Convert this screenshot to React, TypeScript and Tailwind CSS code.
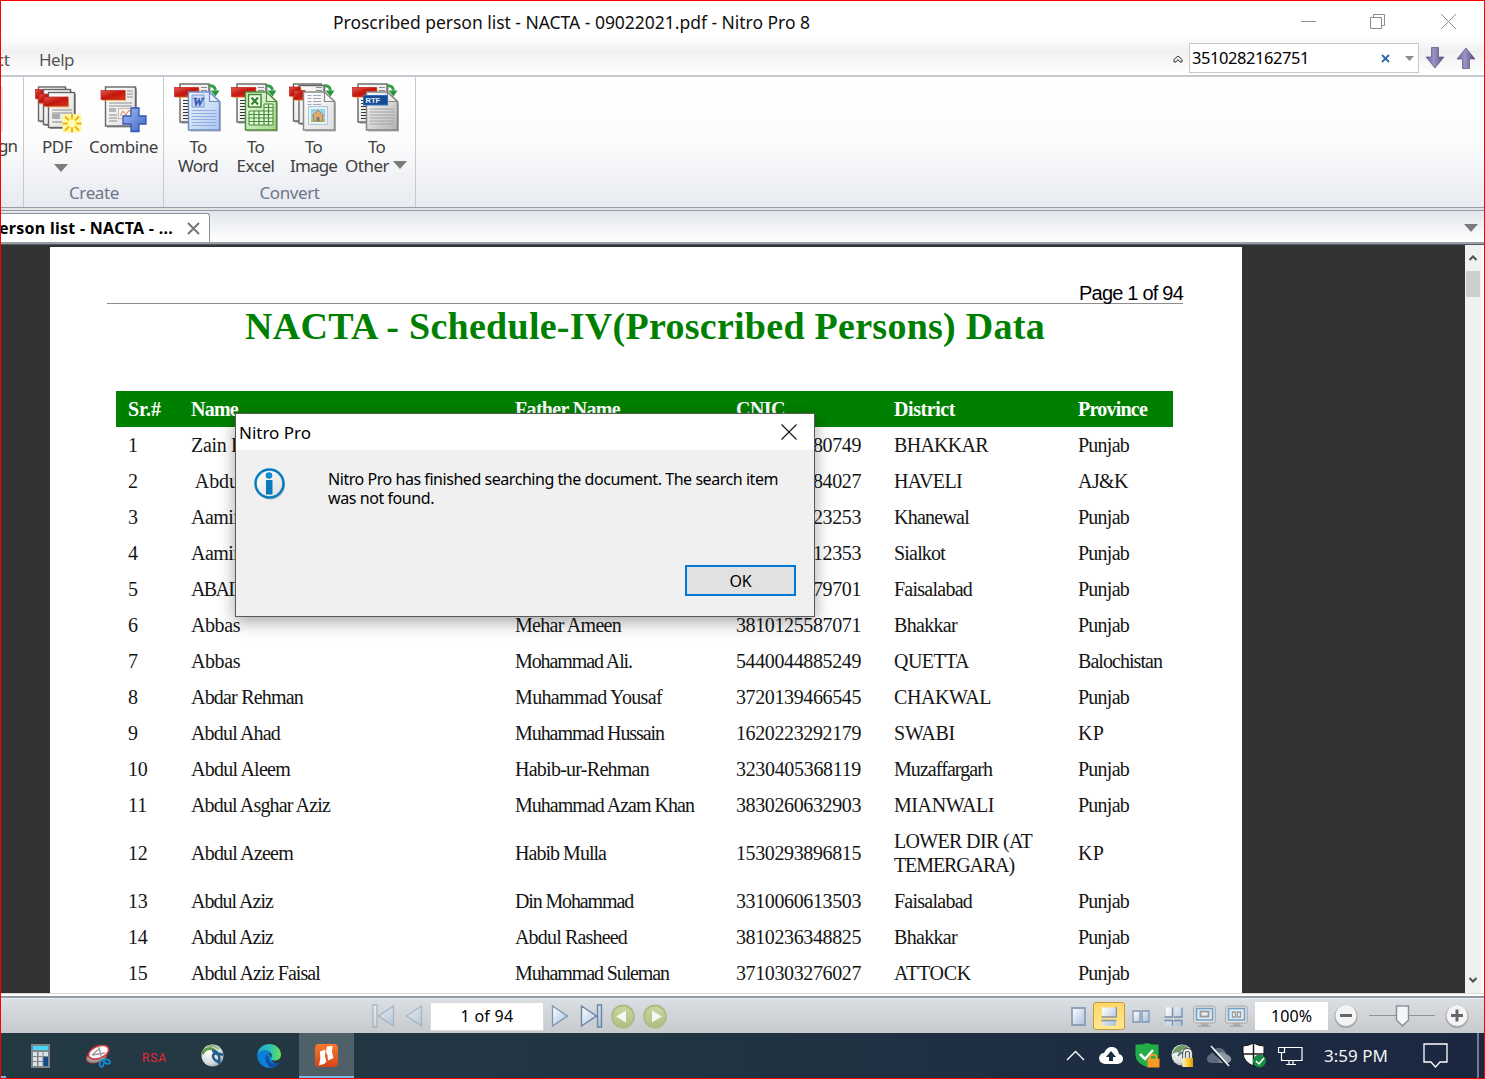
import { useLayoutEffect, useRef, type ReactNode } from "react";

/** Single-line text whose tracking is adjusted so that it spans `w` pixels. */
function Fit({ w, children, className = "" }: { w: number; children: string; className?: string }) {
  const ref = useRef<HTMLSpanElement>(null);
  useLayoutEffect(() => {
    const el = ref.current;
    if (!el) return;
    el.style.letterSpacing = "0px";
    const natural = el.getBoundingClientRect().width;
    el.style.letterSpacing = `${(w - natural) / children.length}px`;
  }, [w, children]);
  return (
    <span ref={ref} className={`inline-block w-max shrink-0 whitespace-pre ${className}`}>
      {children}
    </span>
  );
}

type Cell = [string, number];
type Row = { n: string; name: Cell; father?: Cell; cnic: Cell; district: Cell[]; province: Cell };

const rows: Row[] = [
  { n: "1", name: ["Zain Hassan", 96], cnic: ["3830195380749", 125], district: [["BHAKKAR", 94]], province: ["Punjab", 51] },
  { n: "2", name: [" Abdul Basit", 99], cnic: ["8230154984027", 125], district: [["HAVELI", 68]], province: ["AJ&K", 50] },
  { n: "3", name: ["Aamir Ali", 76], cnic: ["3610391423253", 125], district: [["Khanewal", 75]], province: ["Punjab", 51] },
  { n: "4", name: ["Aamir Ali", 76], cnic: ["3460356812353", 125], district: [["Sialkot", 51]], province: ["Punjab", 51] },
  { n: "5", name: ["ABAID ULLAH", 118], cnic: ["3310047579701", 125], district: [["Faisalabad", 78]], province: ["Punjab", 51] },
  { n: "6", name: ["Abbas", 49], father: ["Mehar Ameen", 106], cnic: ["3810125587071", 125], district: [["Bhakkar", 63]], province: ["Punjab", 51] },
  { n: "7", name: ["Abbas", 49], father: ["Mohammad Ali.", 117], cnic: ["5440044885249", 125], district: [["QUETTA", 75]], province: ["Balochistan", 84] },
  { n: "8", name: ["Abdar Rehman", 112], father: ["Muhammad Yousaf", 147], cnic: ["3720139466545", 125], district: [["CHAKWAL", 97]], province: ["Punjab", 51] },
  { n: "9", name: ["Abdul Ahad", 89], father: ["Muhammad Hussain", 149], cnic: ["1620223292179", 125], district: [["SWABI", 61]], province: ["KP", 26] },
  { n: "10", name: ["Abdul Aleem", 99], father: ["Habib-ur-Rehman", 134], cnic: ["3230405368119", 125], district: [["Muzaffargarh", 98]], province: ["Punjab", 51] },
  { n: "11", name: ["Abdul Asghar Aziz", 139], father: ["Muhammad Azam Khan", 179], cnic: ["3830260632903", 125], district: [["MIANWALI", 100]], province: ["Punjab", 51] },
  { n: "12", name: ["Abdul Azeem", 102], father: ["Habib Mulla", 91], cnic: ["1530293896815", 125], district: [["LOWER DIR (AT", 138], ["TEMERGARA)", 120]], province: ["KP", 26] },
  { n: "13", name: ["Abdul Aziz", 82], father: ["Din Mohammad", 118], cnic: ["3310060613503", 125], district: [["Faisalabad", 78]], province: ["Punjab", 51] },
  { n: "14", name: ["Abdul Aziz", 82], father: ["Abdul Rasheed", 112], cnic: ["3810236348825", 125], district: [["Bhakkar", 63]], province: ["Punjab", 51] },
  { n: "15", name: ["Abdul Aziz Faisal", 129], father: ["Muhammad Suleman", 154], cnic: ["3710303276027", 125], district: [["ATTOCK", 77]], province: ["Punjab", 51] },
];

const tableCols = "grid grid-cols-[63px_324px_221px_158px_184px_94px] pl-3";

function Defs() {
  return (
    <svg width="0" height="0" className="absolute">
      <defs>
        <linearGradient id="red" x1="0" y1="0" x2="1" y2="1">
          <stop offset="0" stopColor="#de5a50" /><stop offset="0.5" stopColor="#c4150c" /><stop offset="1" stopColor="#d33a1b" />
        </linearGradient>
        <linearGradient id="paper" x1="0" y1="0" x2="1" y2="1">
          <stop offset="0" stopColor="#ffffff" /><stop offset="1" stopColor="#dedede" />
        </linearGradient>
        <linearGradient id="bluePaper" x1="0" y1="0" x2="1" y2="1">
          <stop offset="0" stopColor="#f7faff" /><stop offset="1" stopColor="#abc6ef" />
        </linearGradient>
        <linearGradient id="greenPaper" x1="0" y1="0" x2="1" y2="1">
          <stop offset="0" stopColor="#f6fff1" /><stop offset="1" stopColor="#a4d288" />
        </linearGradient>
        <linearGradient id="grayPaper" x1="0" y1="0" x2="1" y2="1">
          <stop offset="0" stopColor="#ffffff" /><stop offset="1" stopColor="#b2b2b2" />
        </linearGradient>
        <linearGradient id="plus" x1="0" y1="0" x2="1" y2="1">
          <stop offset="0" stopColor="#a3bdf3" /><stop offset="1" stopColor="#3e64c4" />
        </linearGradient>
        <linearGradient id="glass" x1="0" y1="0" x2="1" y2="1">
          <stop offset="0" stopColor="#ffffff" /><stop offset="1" stopColor="#a6c0d9" />
        </linearGradient>
        <linearGradient id="edgeTop" x1="0" y1="0.5" x2="1" y2="0.5">
          <stop offset="0" stopColor="#1ba6dd" /><stop offset="0.6" stopColor="#34c4b0" /><stop offset="1" stopColor="#6be04e" />
        </linearGradient>
        <linearGradient id="nitro" x1="0" y1="0" x2="0" y2="1">
          <stop offset="0" stopColor="#f77b2f" /><stop offset="1" stopColor="#d2451b" />
        </linearGradient>
        <linearGradient id="arrow" x1="0" y1="0" x2="1" y2="0">
          <stop offset="0" stopColor="#74689b" /><stop offset="0.45" stopColor="#9993c6" /><stop offset="1" stopColor="#594676" />
        </linearGradient>
        <linearGradient id="lock" x1="0" y1="0" x2="1" y2="0">
          <stop offset="0" stopColor="#fff3c0" /><stop offset="0.6" stopColor="#ffc62b" /><stop offset="1" stopColor="#e39206" />
        </linearGradient>
        <radialGradient id="ball" cx="0.35" cy="0.3" r="0.8">
          <stop offset="0" stopColor="#ffffff" /><stop offset="0.7" stopColor="#d4dbdb" /><stop offset="1" stopColor="#8d9999" />
        </radialGradient>
        <linearGradient id="green" x1="0" y1="0" x2="0" y2="1">
          <stop offset="0" stopColor="#c8d8a3" /><stop offset="1" stopColor="#adbf83" />
        </linearGradient>
      </defs>
    </svg>
  );
}

function Sheet({ x, y, w = 31, h = 40 }: { x: number; y: number; w?: number; h?: number }) {
  return (
    <g>
      <rect x={x + 1.5} y={y + 1.5} width={w} height={h} fill="#333" opacity="0.5" />
      <rect x={x} y={y} width={w} height={h} fill="url(#paper)" stroke="#666" strokeWidth="1.4" />
    </g>
  );
}

function Lines({ x, y, w, n, gap = 3, c = "#8b8b8b" }: { x: number; y: number; w: number; n: number; gap?: number; c?: string }) {
  return <path d={Array.from({ length: n }, (_, i) => `M${x} ${y + i * gap}h${w}`).join("")} stroke={c} strokeWidth="1.1" fill="none" />;
}

function Banner({ x, y, w = 25 }: { x: number; y: number; w?: number }) {
  return (
    <g>
      <rect x={x + 1} y={y + 1} width={w} height="9.5" fill="#f0a03a" opacity="0.7" />
      <rect x={x} y={y} width={w} height="9" fill="url(#red)" stroke="#bd2219" strokeWidth="0.7" />
    </g>
  );
}

function PdfIcon() {
  return (
    <svg width="48" height="48" viewBox="0 0 48 48" className="block overflow-visible">
      <Sheet x={3.5} y={1} w={27} h={34} />
      <Banner x={0.5} y={3.5} w={10} />
      <Sheet x={8.5} y={3.5} w={27} h={35} />
      <Banner x={4} y={8} w={10} />
      <Sheet x={13.5} y={6.5} w={26} h={35} />
      <Lines x={17} y={24} w={20} n={2} />
      <path d="M17 28h8v5h-8z" fill="#ababab" />
      <Lines x={17} y={36} w={10} n={1} />
      <Lines x={28} y={29} w={9} n={3} />
      <Banner x={9} y={11} w={24} />
      <rect x="27.5" y="28" width="19" height="18.5" fill="#fff7a3" />
      <path d="M37 28v18.500M27.500 37.500h19M30 30.500l14 14M44 30.500l-14 14" stroke="#f2b40a" strokeWidth="2" />
      <circle cx="37" cy="37.500" r="4.200" fill="#fffbc0" stroke="#ffe860" strokeWidth="1.300" />
    </svg>
  );
}

function CombineIcon() {
  return (
    <svg width="48" height="48" viewBox="0 0 48 48" className="block overflow-visible">
      <Sheet x={5.5} y={1} w={30} h={39} />
      <Lines x={27} y={5} w={6} n={3} />
      <Lines x={9} y={17} w={23} n={2} />
      <path d="M9 22h7v4H9z" fill="#b5b5b5" />
      <Lines x={9} y={29} w={8} n={3} />
      <rect x="18.500" y="22.500" width="14" height="10" fill="#f9f1ea" stroke="#c9b8ae" />
      <path d="M20 30l3-5 3 4 3-5 3 4" stroke="#d78470" fill="none" />
      <Banner x={1} y={4.500} w={24} />
      <path d="M31 22h8v8h7v8h-7v7.500h-8V38h-8v-8h8z" fill="url(#plus)" stroke="#3356b5" strokeWidth="1.300" />
    </svg>
  );
}

function ConvertBase({ double = false }: { double?: boolean }) {
  return (
    <g>
      {double && <Sheet x={4.500} y={1} w={28} h={37} />}
      <Sheet x={double ? 10 : 6} y={double ? 2.5 : 1} w={double ? 25 : 29} h={38} />
      {!double && <Lines x={9} y={17.500} w={8} n={7} c="#333" />}
      <Lines x={27} y={4.500} w={6} n={2} />
      {double ? <><Banner x={0.500} y={4} w={11} /><Banner x={5} y={7.500} w={11} /></> : <Banner x={0.500} y={4.500} w={24} />}
      <path d="M35 2.500q6 0 6.500 5" stroke="#35a04a" strokeWidth="2.800" fill="none" />
      <path d="M36.500 7.500h9l-4 6z" fill="#299641" />
    </g>
  );
}

function FoldedPage({ fill, stroke }: { fill: string; stroke: string }) {
  return (
    <g>
      <path d="M16 11h20l11 9v28.500H16z" fill="#333" opacity="0.35" />
      <path d="M14.500 9h21l10 9.500v28.500h-31z" fill={fill} stroke={stroke} strokeWidth="1.500" />
      <path d="M35.500 9v9.500h10z" fill="#fff" fillOpacity="0.450" stroke={stroke} strokeWidth="1.200" />
    </g>
  );
}

function WordIcon() {
  return (
    <svg width="49" height="49" viewBox="0 0 49 49" className="block overflow-visible">
      <ConvertBase />
      <FoldedPage fill="url(#bluePaper)" stroke="#6f8ec8" />
      <Lines x={17.500} y={27.500} w={25} n={6} gap={3} c="#93ade0" />
      <rect x="18" y="12" width="12" height="12" fill="#ccdaf4" stroke="#7d97d4" />
      <text x="24" y="22.500" textAnchor="middle" fill="#3158b5" stroke="#3158b5" strokeWidth="0.500" className="font-['Liberation_Serif'] text-[12px] font-bold italic">W</text>
    </svg>
  );
}

function ExcelIcon() {
  return (
    <svg width="49" height="49" viewBox="0 0 49 49" className="block overflow-visible">
      <ConvertBase />
      <FoldedPage fill="url(#greenPaper)" stroke="#4e9238" />
      <path d="M33 21h9v21H18V28h15z" fill="#e8f8df" stroke="#418d32" />
      <path d="M18 31.500h24M18 35h24M18 38.500h24M33 24.500h9M33 28h9M23 28v14M28 28v14M33 28v14M37.500 21v21" stroke="#418d32" strokeWidth="1.200" />
      <rect x="17.500" y="11.500" width="12.500" height="12.500" fill="#f2ffed" stroke="#3b872e" strokeWidth="1.500" />
      <path d="M20.500 14.500l6.500 7M27 14.500l-6.500 7" stroke="#36812b" strokeWidth="2.200" />
    </svg>
  );
}

function ImageIcon() {
  return (
    <svg width="49" height="49" viewBox="0 0 49 49" className="block overflow-visible">
      <ConvertBase double />
      <FoldedPage fill="url(#paper)" stroke="#8b8b8b" />
      <Lines x={18.500} y={12.500} w={4} n={4} c="#9da7b9" />
      <Lines x={24} y={12.500} w={8} n={4} c="#9da7b9" />
      <rect x="19.500" y="23.500" width="19" height="18" fill="#e8f0f8" stroke="#b3c4d6" />
      <rect x="22" y="26" width="14" height="13" fill="#91d3ee" />
      <path d="M22 36h14v3H22z" fill="#9fc56a" />
      <path d="M23 33l6-6 6 6h-1.500v5h-9v-5z" fill="#dfad6d" stroke="#a77c4d" strokeWidth="0.800" />
      <path d="M27.500 38v-4h3v4" fill="#777" />
    </svg>
  );
}

function RtfIcon() {
  return (
    <svg width="49" height="49" viewBox="0 0 49 49" className="block overflow-visible">
      <ConvertBase />
      <FoldedPage fill="url(#grayPaper)" stroke="#858585" />
      <Lines x={17.500} y={26} w={25} n={6} c="#a4a4a4" />
      <rect x="11.500" y="12.500" width="24" height="9.500" fill="#174c94" stroke="#2e6fb9" />
      <text x="13.500" y="20" fill="#e9f3ff" className="font-['Liberation_Sans'] text-[7.5px] font-bold">RTF</text>
    </svg>
  );
}

function Caret({ className = "" }: { className?: string }) {
  return (
    <svg width="14" height="8" viewBox="0 0 14 8" className={`block shrink-0 ${className}`}>
      <path d="M0 0h14L7 8z" fill="#7b7b7b" />
    </svg>
  );
}

function TitleBar() {
  return (
    <div className="flex h-[42px] items-center pl-[332px]">
      <Fit w={477} className="text-[17.5px] leading-[40px] text-[#111]">Proscribed person list - NACTA - 09022021.pdf - Nitro Pro 8</Fit>
      <svg width="160" height="18" viewBox="0 0 160 18" className="mb-[1px] ml-auto mr-[24px] block" fill="none" stroke="#8d8d8d">
        <path d="M1 8.500h15M70.500 4.500h11v11h-11zM73.500 4.500v-3h11v11h-3M141 1l15 15M156 1l-15 15" />
      </svg>
    </div>
  );
}

function MenuRow() {
  return (
    <div className="flex h-[32px] items-center text-[17px] text-[#555]">
      <span className="flex w-[9px] justify-end overflow-hidden pt-[2px]">ct</span>
      <span className="ml-[29px] pt-[2px]"><Fit w={35}>Help</Fit></span>
      <svg width="10" height="9" viewBox="0 0 10 9" className="ml-auto mr-[6px] block" fill="none" stroke="#333">
        <path d="M1 4.500l4-3.500 4 3.500V7H7L5 4.500 3 7H1z" />
      </svg>
      <div className="mb-[2px] flex h-[30px] w-[230px] shrink-0 items-center border border-[#c9c9c9] bg-white pl-[2px] text-black">
        <Fit w={117} className="text-[16.5px]">3510282162751</Fit>
        <svg width="9" height="9" viewBox="0 0 9 9" className="ml-[72px] block" stroke="#2b6ca8" strokeWidth="1.800"><path d="M1 1l7 7M8 1L1 8" /></svg>
        <svg width="9" height="5" viewBox="0 0 9 5" className="ml-[15px] block"><path d="M0 0h9L4.500 5z" fill="#8a8a8a" /></svg>
      </div>
      <svg width="20" height="22" viewBox="0 0 20 22" className="mb-[3px] ml-[6px] block"><path d="M6.500 0.500h7v9.500h5.500l-9 11-9-11h5.500z" fill="url(#arrow)" stroke="#615280" strokeWidth="0.700" /></svg>
      <svg width="20" height="22" viewBox="0 0 20 22" className="mb-[3px] ml-[11px] mr-[8px] block"><path d="M6.500 21.500h7V12h5.500l-9-11-9 11h5.500z" fill="url(#arrow)" stroke="#615280" strokeWidth="0.700" /></svg>
    </div>
  );
}

function RibbonButton({ icon, a, aw, b, bw = 0, className }: { icon: ReactNode; a: string; aw: number; b?: string; bw?: number; className: string }) {
  return (
    <div className={`flex flex-col items-center ${className}`}>
      {icon}
      <div className="mt-[5px] flex flex-col items-center text-[17px] leading-[19px]">
        <Fit w={aw}>{a}</Fit>
        {b && <Fit w={bw}>{b}</Fit>}
      </div>
    </div>
  );
}

function Ribbon() {
  return (
    <div className="flex h-[130px] bg-gradient-to-b from-white via-[#fcfcfc] to-[#e7eaf0] text-[17px] text-[#3e3e3e]">
      <div className="h-full w-[23px] border-r border-[#c7cbd0] pt-[10px]">
        <div className="h-[45px] w-[2px] bg-[#e4e4e4]" />
        <div className="mt-[3px] flex w-[16px] justify-end overflow-hidden leading-[22px]"><Fit w={19}>gn</Fit></div>
      </div>
      <div className="flex h-full w-[140px] flex-col border-r border-[#c7cbd0]">
        <div className="flex h-[105px] pt-[9px]">
          <div className="ml-[10px] flex w-[50px] flex-col items-center">
            <PdfIcon />
            <div className="-ml-[4px] mt-[3px] leading-[20px]"><Fit w={30}>PDF</Fit></div>
            <Caret className="ml-[3px] mt-[7px]" />
          </div>
          <div className="ml-[5px] flex w-[69px] flex-col items-center">
            <CombineIcon />
            <div className="mt-[3px] leading-[20px]"><Fit w={69}>Combine</Fit></div>
          </div>
        </div>
        <div className="flex h-[22px] items-center justify-center pl-[1px] text-[#70758a]"><Fit w={50}>Create</Fit></div>
      </div>
      <div className="flex h-full w-[252px] flex-col border-r border-[#c7cbd0]">
        <div className="flex h-[105px] pt-[6px]">
          <RibbonButton icon={<WordIcon />} a="To" aw={17} b="Word" bw={40} className="ml-[10px] w-[48px]" />
          <RibbonButton icon={<ExcelIcon />} a="To" aw={17} b="Excel" bw={38} className="ml-[9px] w-[49px]" />
          <RibbonButton icon={<ImageIcon />} a="To" aw={17} b="Image" bw={47} className="ml-[9px] w-[49px]" />
          <div className="ml-[14px] w-[62px]">
            <RibbonButton icon={<RtfIcon />} a="To" aw={17} className="w-[49px]" />
            <div className="-ml-[7px] flex items-center leading-[19px]">
              <Fit w={44}>Other</Fit>
              <Caret className="mb-[2px] ml-[4px]" />
            </div>
          </div>
        </div>
        <div className="flex h-[22px] items-center justify-center text-[#70758a]"><Fit w={60}>Convert</Fit></div>
      </div>
    </div>
  );
}

function TabBar() {
  return (
    <div className="flex h-[31px] items-end bg-gradient-to-b from-[#e2e5ec] to-white">
      <div className="flex h-[29px] w-[209px] items-center overflow-hidden rounded-tr-[3px] border-r border-t border-[#8c929b] bg-white">
        <div className="flex w-[172px] justify-end overflow-hidden"><Fit w={174} className="text-[16px] font-bold text-black">erson list - NACTA - ...</Fit></div>
        <svg width="13" height="13" viewBox="0 0 13 13" className="ml-[14px] block shrink-0" stroke="#777" strokeWidth="2"><path d="M1 1l11 11M12 1L1 12" /></svg>
      </div>
      <Caret className="mb-[10px] ml-auto mr-[6px]" />
    </div>
  );
}

function Page() {
  return (
    <div className="ml-[49px] mt-[2px] h-[746px] w-[1192px] overflow-hidden bg-white">
      <div className="ml-[57px] flex h-[57px] w-[1076px] items-end justify-end border-b border-[#8e8e8e]">
        <Fit w={104} className="mb-[-2px] font-['Liberation_Sans'] text-[20px] leading-[24px] text-black">Page 1 of 94</Fit>
      </div>
      <div className="ml-[195px] h-[87px] leading-[45px]">
        <Fit w={800} className="font-['Liberation_Serif'] text-[38px] font-bold text-[#008000]">NACTA - Schedule-IV(Proscribed Persons) Data</Fit>
      </div>
      <div className="ml-[66px] w-[1057px] font-['Liberation_Serif'] text-[20px] leading-[24px] text-[#151515]">
        <div className={`${tableCols} h-[36px] items-center bg-[#008000] font-bold text-white`}>
          <Fit w={33}>Sr.#</Fit>
          <Fit w={47}>Name</Fit>
          <Fit w={105}>Father Name</Fit>
          <Fit w={49}>CNIC</Fit>
          <Fit w={61}>District</Fit>
          <Fit w={69}>Province</Fit>
        </div>
        {rows.map((r) => (
          <div key={r.n} className={`${tableCols} items-center py-[6px]`}>
            <Fit w={r.n.length * 9.7}>{r.n}</Fit>
            <Fit w={r.name[1]}>{r.name[0]}</Fit>
            {r.father ? <Fit w={r.father[1]}>{r.father[0]}</Fit> : <span />}
            <Fit w={r.cnic[1]}>{r.cnic[0]}</Fit>
            <div className="flex flex-col">
              {r.district.map(([t, w]) => <div key={t} className="h-6"><Fit w={w}>{t}</Fit></div>)}
            </div>
            <Fit w={r.province[1]}>{r.province[0]}</Fit>
          </div>
        ))}
      </div>
    </div>
  );
}

function Dialog() {
  return (
    <div className="absolute left-[234px] top-[412px] flex h-[204px] w-[580px] flex-col border border-[#595959] bg-[#f0f0f0] text-black shadow-[0_5px_16px_rgba(0,0,0,0.35)]">
      <div className="flex h-[36px] items-center justify-between bg-white pl-[3px] pr-[16px]">
        <Fit w={72} className="pt-[2px] text-[17px]">Nitro Pro</Fit>
        <svg width="16" height="16" viewBox="0 0 16 16" className="mr-[1px]" stroke="#111" strokeWidth="1.100"><path d="M0.500 0.500l15 15M15.500 0.500l-15 15" /></svg>
      </div>
      <div className="flex pl-[18px] pt-[18px]">
        <svg width="32" height="33" viewBox="0 0 32 33" className="block">
          <circle cx="16.500" cy="17" r="14.500" fill="#888" opacity="0.500" />
          <circle cx="15.500" cy="15.500" r="14" fill="url(#paper)" stroke="#087cc0" strokeWidth="2.500" />
          <circle cx="15" cy="7.500" r="3.300" fill="#108bd0" />
          <path d="M12 12h6.500v14.500H12z" fill="#0878bf" />
        </svg>
        <div className="ml-[42px] mt-[2px] flex flex-col font-['Noto_Sans'] text-[16px] leading-[19px]">
          <Fit w={450}>Nitro Pro has finished searching the document. The search item</Fit>
          <Fit w={106}>was not found.</Fit>
        </div>
      </div>
      <div className="mb-[20px] ml-auto mr-[18px] mt-auto flex h-[31px] w-[111px] items-center justify-center border-2 border-[#0078d7] bg-[#e1e1e1] text-[16px]">
        <Fit w={22}>OK</Fit>
      </div>
    </div>
  );
}

function ScrollBar() {
  return (
    <div className="ml-auto flex h-[748px] w-[19px] flex-col items-center border-r-[3px] border-[#fafafa] bg-[#f0f0f0]">
      <svg width="8" height="6" viewBox="0 0 8 6" className="mt-[10px] block" fill="none" stroke="#505050" strokeWidth="2"><path d="M0.500 5L4 1.500 7.500 5" /></svg>
      <div className="mt-[10px] h-[26px] w-[14px] bg-[#cdcdcd]" />
      <svg width="8" height="6" viewBox="0 0 8 6" className="mb-[10px] mt-auto block" fill="none" stroke="#505050" strokeWidth="2"><path d="M0.500 1L4 4.500 7.500 1" /></svg>
    </div>
  );
}

function ZoomButton({ plus = false, className }: { plus?: boolean; className: string }) {
  return (
    <svg width="26" height="26" viewBox="0 0 26 26" className={`block shrink-0 ${className}`}>
      <circle cx="13" cy="13.500" r="11.500" fill="#a6a9ad" />
      <circle cx="13" cy="12.500" r="10.500" fill="#f4f4f4" />
      <path d={plus ? "M7 12.500h12M13 6.500v12" : "M7 12.500h12"} stroke="#666" strokeWidth="3" />
    </svg>
  );
}

function GreenNav({ next = false, className }: { next?: boolean; className: string }) {
  return (
    <svg width="24" height="25" viewBox="0 0 24 25" className={`block shrink-0 ${className}`}>
      <circle cx="12" cy="12.500" r="11" fill="url(#green)" stroke="#aabd80" strokeWidth="1.800" />
      <path d={next ? "M9 6.500l10 6-10 6z" : "M15 6.500l-10 6 10 6z"} fill="#f5f7ef" />
    </svg>
  );
}

function MonitorMode({ two = false, className }: { two?: boolean; className: string }) {
  return (
    <svg width="23" height="23" viewBox="0 0 23 23" className={`block shrink-0 ${className}`}>
      <rect x="0.700" y="1" width="21.500" height="17" rx="2" fill="#e3e3e3" stroke="#a5a5a5" />
      <rect x="3.500" y="3.500" width="16" height="11.500" fill="#dbe9f3" stroke="#6da1c8" strokeWidth="1.500" />
      {two ? <path d="M7.500 7h3v5h-3zM12.500 7h3v5h-3z" fill="#f4f4f4" stroke="#999" strokeWidth="1.300" /> : <rect x="7.500" y="6.500" width="8" height="5" fill="#eee" stroke="#999" strokeWidth="1.800" />}
      <path d="M8 18h7v2.500h3V22H5v-1.500h3z" fill="#aaa" />
    </svg>
  );
}

function StatusBar() {
  return (
    <div className="flex h-[35px] items-center border-t border-[#e9edf1] bg-gradient-to-b from-[#dadfe3] to-[#c7cacd]">
      <svg width="23" height="24" viewBox="0 0 23 24" className="ml-[371px] block opacity-60"><path d="M1 1h4v22H1zM21.500 2v20L6.500 12z" fill="url(#glass)" stroke="#8da0b7" strokeWidth="1.300" /></svg>
      <svg width="18" height="24" viewBox="0 0 18 24" className="ml-[10px] block opacity-60"><path d="M16.500 2v20L1.500 12z" fill="url(#glass)" stroke="#8da0b7" strokeWidth="1.300" /></svg>
      <div className="ml-[8px] flex h-[27px] w-[112px] items-center justify-center bg-white text-[16px] text-black outline outline-1 outline-[#d7dadd]"><Fit w={53}>1 of 94</Fit></div>
      <svg width="18" height="24" viewBox="0 0 18 24" className="ml-[8px] block"><path d="M1.500 2v20l15-10z" fill="url(#glass)" stroke="#7b94b3" strokeWidth="1.300" /></svg>
      <svg width="23" height="24" viewBox="0 0 23 24" className="ml-[11px] block"><path d="M17.500 1h4v22h-4zM1.500 2v20l15-10z" fill="url(#glass)" stroke="#6b85a5" strokeWidth="1.400" /></svg>
      <GreenNav className="ml-[8px]" />
      <GreenNav next className="ml-[8px]" />
      <svg width="15" height="19" viewBox="0 0 15 19" className="ml-auto block shrink-0"><path d="M1 1h13v17H1z" fill="url(#glass)" stroke="#8ba0b8" strokeWidth="1.800" /></svg>
      <div className="ml-[7px] flex h-[28px] w-[32px] items-center justify-center rounded-[3px] border border-[#c59a39] bg-gradient-to-b from-[#ffd765] to-[#ffe790]">
        <svg width="16" height="19" viewBox="0 0 16 19"><path d="M1 0.500h14v9H1zM1 18.500v-5h14v5z" fill="url(#glass)" /><path d="M0.500 10h15M0.500 13.500h15M15.500 0v10" stroke="#8294a9" strokeWidth="1.500" /></svg>
      </div>
      <svg width="18" height="13" viewBox="0 0 18 13" className="ml-[7px] block shrink-0"><path d="M1 1h7v11H1zM10 1h7v11h-7z" fill="url(#glass)" stroke="#8197b3" strokeWidth="1.300" /></svg>
      <svg width="19" height="19" viewBox="0 0 19 19" className="ml-[14px] block shrink-0">
        <path d="M2 0.500h6.500V9.500H2zM11 0.500h6.500V9.500H11zM2 14h6.500v4.500H2zM11 14h6.500v4.500H11z" fill="url(#glass)" />
        <path d="M0.500 10H8.500V0.500M10 10h8V0.500M0.500 13.500h8v5M10 13.500h8v5" fill="none" stroke="#758dac" strokeWidth="1.300" />
      </svg>
      <MonitorMode className="ml-[10px]" />
      <MonitorMode two className="ml-[9px]" />
      <div className="ml-[7px] flex h-[28px] w-[73px] shrink-0 items-center justify-center bg-white text-[16px] text-black"><Fit w={41}>100%</Fit></div>
      <ZoomButton className="ml-[5px]" />
      <svg width="66" height="22" viewBox="0 0 66 22" className="ml-[10px] block shrink-0"><path d="M0 10.500h66" stroke="#8d959b" /><path d="M27.500 1h12v14l-6 6-6-6z" fill="#f4f7fa" stroke="#89929c" strokeWidth="1.500" /></svg>
      <ZoomButton plus className="ml-[9px] mr-[14px]" />
    </div>
  );
}

function TaskBar() {
  return (
    <div className="flex h-[45px] items-center bg-gradient-to-r from-[#243a43] via-[#203342] via-50% to-[#1b2741]">
      <div className="h-[2px] w-[5px] self-end bg-[#76b9ed]" />
      <svg width="19" height="24" viewBox="0 0 19 24" className="ml-[25px] block shrink-0">
        <path d="M0 0h19v24H0z" fill="#7b858a" /><path d="M2 2h15v4H2z" fill="#48d7fa" />
        <path d="M2 8h4v4H2zM7.500 8h4v4h-4zM12.500 8h4.500v4h-4.500zM2 13h4v4H2zM7.500 13h4v4h-4zM2 18h4v4H2zM7.500 18h4v4h-4z" fill="#dce4e8" />
        <path d="M12.500 13H17v9h-4.500z" fill="#124b86" />
      </svg>
      <svg width="25" height="24" viewBox="0 0 25 24" className="ml-[36px] block shrink-0">
        <ellipse cx="10.500" cy="13" rx="10.500" ry="5.500" transform="rotate(-15 10.500 13)" fill="#9c9c9c" stroke="#a9474b" />
        <ellipse cx="12.500" cy="8.500" rx="10.500" ry="6" transform="rotate(-22 12 8)" fill="#fff" stroke="#d73940" strokeWidth="1.600" />
        <path d="M13 3l3 13M6 11l13-2M6 11l7-6" stroke="#999" strokeWidth="1.300" fill="none" />
        <g fill="none" stroke="#178bd1" strokeWidth="1.800"><ellipse cx="16" cy="19.500" rx="2" ry="3.300" transform="rotate(15 16 19)" /><ellipse cx="21" cy="17.500" rx="3.300" ry="2" transform="rotate(20 21 17)" /></g>
      </svg>
      <span className="ml-[31px] w-[25px]"><Fit w={25} className="font-['Roboto'] text-[12px] text-[#f22432]">RSA</Fit></span>
      <svg width="23" height="23" viewBox="0 0 23 23" className="ml-[34px] block shrink-0">
        <circle cx="11.500" cy="11.500" r="11" fill="url(#ball)" />
        <path d="M1 10C5 3 12 2 17 11" fill="none" stroke="#5e9a45" strokeWidth="3" />
        <path d="M6 3q6-3 12 2" fill="none" stroke="#92b981" strokeWidth="2" />
        <path d="M22 11q-9-4-10 1 0 4 6 6M11 7q9 0 7 13" fill="none" stroke="#255d91" strokeWidth="2.600" />
      </svg>
      <svg width="24" height="24" viewBox="0 0 24 24" className="ml-[33px] block shrink-0">
        <path d="M0.300 10C0 18 6 24 12.500 24c4 0 8-2 10-5-5 2-8-1-8-5L10 6z" fill="#0b7ed8" />
        <path d="M9 9.500C5 14 8 23.500 15.500 23.600c3-.6 6-3 7.200-5.200-5 2.500-11.500 1-11-5z" fill="#124f9d" />
        <path d="M0.300 11C1 4 6 0 12 0c7 0 12 5 12 10.500 0 4-3 6-6.500 6-3 0-4.300-1-3.200-2.500C16 10.500 13 6.500 8.500 6.500 5 6.500 2 8 0.300 11z" fill="url(#edgeTop)" />
        <path d="M0.300 11C2 8 5 6.500 8.500 6.500c2.500 0 4.500 1.200 5.500 3-3-1.500-5.500 1-5.500 4.500 0 4 2 7.500 5 9.800C6 24 0 18 0.300 11z" fill="#0c7fd6" />
      </svg>
      <div className="ml-[18px] flex h-full w-[55px] items-center justify-center border-b-2 border-[#76b9ed] bg-[#4f6069]">
        <svg width="23" height="23" viewBox="0 0 23 23" className="mt-[2px] block">
          <rect width="23" height="23" rx="4" fill="url(#nitro)" />
          <path d="M5 7.500l5.500-2-.5 6.500 1.500 5.500L9 20l-5 1.200 1.300-6z" fill="#fff" />
          <path d="M12 2.500L17.500 2 17 8l1.500 6-5.500 2.500-.5-5.500-1.500-3z" fill="#fff" />
        </svg>
      </div>
      <svg width="19" height="11" viewBox="0 0 19 11" className="ml-auto block shrink-0" fill="none" stroke="#fff" strokeWidth="1.300"><path d="M1 10l8.500-8.500L18 10" /></svg>
      <svg width="24" height="18" viewBox="0 0 24 18" className="ml-[14px] block shrink-0"><path d="M6 17q-6-1-6-6 1-5 5-5 3-7 9-6 5 1 6 7 4 1 4 5t-5 5z" fill="#fff" /><path d="M12 4l5 6h-3v4h-4v-4H7z" fill="#192c40" /></svg>
      <svg width="25" height="25" viewBox="0 0 25 25" className="ml-[12px] block shrink-0"><path d="M0.500 1.500q6 .5 11.500-1.500 5 2 11.500 1.500V13q-1 8-11.500 11Q0.500 20 0.500 12z" fill="#22ad47" /><path d="M5 11l5 5 8-9" fill="none" stroke="#fff" strokeWidth="2.500" /><path d="M15 16v-2.500q3-4 6.500 0V16" fill="none" stroke="#f39b24" strokeWidth="1.800" /><path d="M12.500 15.500h12v9h-12z" fill="#f39b24" /></svg>
      <svg width="23" height="24" viewBox="0 0 23 24" className="ml-[11px] block shrink-0"><circle cx="11" cy="11" r="10.500" fill="url(#ball)" /><path d="M1 10Q4 1 12 1q5 1 6 4-7-1-9 4-3-2-8 1z" fill="#6d9a63" /><path d="M7 12q3-5 6-2" fill="none" stroke="#557e91" strokeWidth="2" /><path d="M13 15V9.500q0-3.500 3.500-3.500T20 9.500V15" fill="none" stroke="#3a3a3a" strokeWidth="3.500" /><path d="M13 15V9.500q0-3.500 3.500-3.500T20 9.500V15" fill="none" stroke="#f1f1f1" strokeWidth="1.800" /><path d="M11.500 14h10.500v9H11.500z" fill="url(#lock)" /></svg>
      <svg width="25" height="22" viewBox="0 0 25 22" className="ml-[13px] block shrink-0"><path d="M5 18q-5 0-5-4t4-5q2-7 9-6 5 1 6 6 5 1 5 5t-4 4z" fill="#5e6b7d" /><path d="M9 10q4-5 9-2l6 5q1 4-4 5h-7z" fill="#8d97a4" /><path d="M3 3.500l18 18" stroke="#18293d" strokeWidth="2" /><path d="M4 1l18 20" stroke="#fff" strokeWidth="1.500" /></svg>
      <svg width="25" height="25" viewBox="0 0 25 25" className="ml-[10px] block shrink-0"><path d="M1 3q5 0 10.500-3Q17 3 22 3v8q-1 8-10.500 12Q2 19 1 11z" fill="#fff" stroke="#101010" /><path d="M11.500 0v23M1 11h21" stroke="#1b1b1b" strokeWidth="1.500" /><circle cx="17.500" cy="18" r="6.500" fill="#168c43" /><path d="M14 18l3 3 5-6" fill="none" stroke="#fff" strokeWidth="1.500" /></svg>
      <svg width="25" height="20" viewBox="0 0 25 20" className="ml-[11px] block shrink-0" fill="none" stroke="#fff" strokeWidth="1.200"><path d="M7 1.500h17v13H3.500V8.500M0.500 1.500h6v5h-6zM3.500 6v4M11 15v3M15 15v3M8 18.500h10" /></svg>
      <span className="ml-[21px] pt-[1px]"><Fit w={64} className="text-[17px] text-[#f2f4f6]">3:59 PM</Fit></span>
      <svg width="25" height="25" viewBox="0 0 25 25" className="ml-[35px] mr-[29px] block shrink-0" fill="none" stroke="#fff" strokeWidth="1.300"><path d="M1 1h23v18h-7l-4.500 5L8 19H1z" /></svg>
      <div className="h-full w-[7px] border-l-2 border-[#737c8d]" />
    </div>
  );
}

export default function App() {
  return (
    <div className="relative flex h-[1079px] w-[1485px] flex-col overflow-hidden border border-[#f00] bg-white font-['Noto_Sans',sans-serif]">
      <Defs />
      <div className="h-[74px] bg-[linear-gradient(to_bottom,#fff_0,#fff_35px,#f0f0f0_50px,#fff_74px)]">
        <TitleBar />
        <MenuRow />
      </div>
      <div className="h-[2px] bg-[#c5cbd0]" />
      <Ribbon />
      <div className="h-[4px] border-b border-t border-[#989da3] bg-[#dfe4e6]" />
      <TabBar />
      <div className="h-[3px] border-b border-[#545a5f] bg-[#999fa5]" />
      <div className="flex h-[748px] bg-[#333333]">
        <Page />
        <ScrollBar />
      </div>
      <div className="flex h-[5px] flex-col justify-end border-t border-[#d9d9d9] bg-white"><div className="h-[2px] bg-[#9499a2]" /></div>
      <StatusBar />
      <TaskBar />
      <Dialog />
    </div>
  );
}
